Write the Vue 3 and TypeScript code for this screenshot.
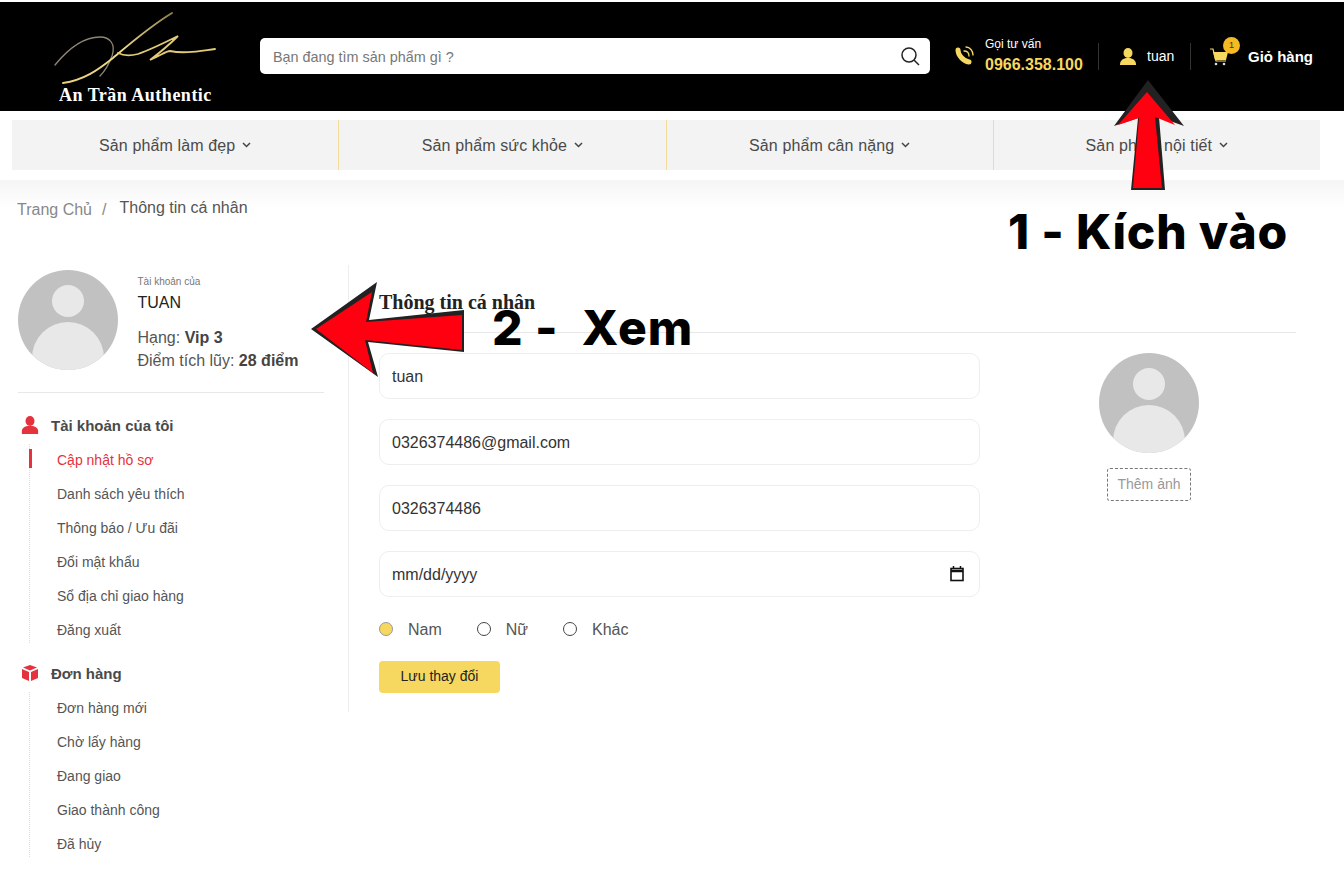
<script setup lang="ts">
const navItems = ['Sản phẩm làm đẹp', 'Sản phẩm sức khỏe', 'Sản phẩm cân nặng', 'Sản phẩm nội tiết'];
const accountLinks = ['Cập nhật hồ sơ', 'Danh sách yêu thích', 'Thông báo / Ưu đãi', 'Đổi mật khẩu', 'Sổ địa chỉ giao hàng', 'Đăng xuất'];
const orderLinks = ['Đơn hàng mới', 'Chờ lấy hàng', 'Đang giao', 'Giao thành công', 'Đã hủy'];
const fields = ['tuan', '0326374486@gmail.com', '0326374486'];
const genders = ['Nam', 'Nữ', 'Khác'];
</script>

<template>
  <div class="page">
    <header class="top">
      <div class="logo">
        <svg class="logo-mark" width="170" height="76" viewBox="0 0 170 76" fill="none" stroke-linecap="round">
          <defs>
            <linearGradient id="gold" x1="0" y1="1" x2="1" y2="0">
              <stop offset="0" stop-color="#e9d27a" />
              <stop offset="0.5" stop-color="#f0dc88" />
              <stop offset="1" stop-color="#8f7f4e" />
            </linearGradient>
          </defs>
          <path d="M1 53C14 37 30 25 46 25C56 25 62 32 58 44C55 52 50 60 46 64" stroke="#8d8672" stroke-width="1.300" />
          <path d="M118 1C95 15 72 35 59 46C44 58 30 68 9 71" stroke="url(#gold)" stroke-width="1.900" />
          <path d="M64 41C70 44 76 44 84 42C98 37 112 30 124 24C116 32 104 42 96 48C106 44 112 39 116 39C130 42 145 39 161 37" stroke="#e2cb75" stroke-width="1.800" />
        </svg>
        <span class="logo-text">An Trần Authentic</span>
      </div>
      <div class="search">
        <span class="search-text">Bạn đang tìm sản phẩm gì ?</span>
        <svg width="20" height="20" viewBox="0 0 20 20" fill="none" stroke="#222" stroke-width="1.500">
          <circle cx="9" cy="9" r="7" />
          <path d="M14 14l5 5" />
        </svg>
      </div>
      <div class="hotline">
        <svg width="22" height="22" viewBox="0 0 22 22" fill="none" stroke="#f6d860" stroke-linecap="round">
          <path d="M4 6C4 11 9 17 15 18" stroke-width="5" />
          <path d="M10 7C13 7 15 9 15 12" stroke-width="1.300" />
          <path d="M12 3C16 3 19 7 19 11" stroke-width="1.300" />
        </svg>
        <div class="hotline-text">
          <span class="hotline-label">Gọi tư vấn</span>
          <b class="hotline-num">0966.358.100</b>
        </div>
      </div>
      <div class="user">
        <svg width="16" height="18" viewBox="0 0 16 18" fill="#f6d860">
          <ellipse cx="8" cy="5" rx="4.500" ry="5" />
          <path d="M0 17c0-4 2-6 6-7h4c4 1 6 3 6 7z" />
        </svg>
        <span class="user-name">tuan</span>
      </div>
      <div class="cart">
        <svg width="20" height="20" viewBox="0 0 20 20" fill="none">
          <path d="M0 2h3l3 12h10" stroke="#f6d860" stroke-width="1.200" />
          <path d="M3 5h15l-2 8H5z" fill="#f6d860" />
          <circle cx="6" cy="17" r="1.300" fill="#ddd" />
          <circle cx="14" cy="17" r="1.300" fill="#ddd" />
        </svg>
        <span class="cart-badge">1</span>
        <b class="cart-label">Giỏ hàng</b>
      </div>
    </header>

    <nav class="nav">
      <div v-for="item in navItems" :key="item" class="nav-item">
        <span class="nav-label">{{ item }}</span>
        <svg width="9" height="6" viewBox="0 0 9 6" fill="none" stroke="#444" stroke-width="1.500">
          <path d="M1 1l3.500 3.500L8 1" />
        </svg>
      </div>
    </nav>

    <div class="crumbs">
      <span class="crumb-link">Trang Chủ</span>
      <span class="crumb-sep">/</span>
      <span>Thông tin cá nhân</span>
    </div>

    <main class="main">
      <aside class="side">
        <div class="profile">
          <svg class="avatar" width="100" height="100" viewBox="0 0 100 100">
            <defs>
              <clipPath id="side-clip"><circle cx="50" cy="50" r="50" /></clipPath>
            </defs>
            <circle cx="50" cy="50" r="50" fill="#c1c1c1" />
            <circle cx="50" cy="31" r="16" fill="#e8e8e8" />
            <ellipse cx="50" cy="88" rx="36" ry="36" fill="#e8e8e8" clip-path="url(#side-clip)" />
          </svg>
          <div class="profile-info">
            <span class="tiny">Tài khoản của</span>
            <span class="name">TUAN</span>
            <span class="rank">Hạng: <b>Vip 3</b></span>
            <span class="rank">Điểm tích lũy: <b>28 điểm</b></span>
          </div>
        </div>

        <div class="menu-title menu-first">
          <svg width="18" height="18" viewBox="0 0 18 18" fill="#e5333d">
            <ellipse cx="9" cy="5" rx="4.500" ry="5" />
            <path d="M1 18c-1-6 2-7 5-8h6c3 1 6 2 5 8z" />
          </svg>
          <span>Tài khoản của tôi</span>
        </div>
        <ul class="menu">
          <li v-for="(link, i) in accountLinks" :key="link" :class="{ active: i === 0 }">{{ link }}</li>
        </ul>

        <div class="menu-title">
          <svg width="18" height="18" viewBox="0 0 18 18" fill="#e5333d">
            <path d="M1 5l7 3v9l-7-3z" />
            <path d="M10 8l7-3v9l-7 3z" />
            <path d="M2 3.500L9 1l7 2.500L9 6.500z" />
          </svg>
          <span>Đơn hàng</span>
        </div>
        <ul class="menu">
          <li v-for="link in orderLinks" :key="link">{{ link }}</li>
        </ul>
      </aside>

      <section class="content">
        <h3 class="content-title">Thông tin cá nhân</h3>
        <div class="content-body">
          <form class="form" @submit.prevent>
            <div v-for="f in fields" :key="f" class="field">{{ f }}</div>
            <div class="field field-date">
              <span>mm/dd/yyyy</span>
              <svg class="calendar" width="14" height="16" viewBox="0 0 14 16" fill="none">
                <path d="M3.500 0v3M10.500 0v3" stroke="#111" stroke-width="1.500" />
                <rect x="1" y="2.500" width="12" height="12" stroke="#111" stroke-width="1.600" />
                <path d="M1 5h12" stroke="#111" stroke-width="2.500" />
              </svg>
            </div>
            <div class="genders">
              <label v-for="(g, i) in genders" :key="g" class="gender">
                <span class="radio" :class="{ on: i === 0 }"></span>
                <span class="gender-label">{{ g }}</span>
              </label>
            </div>
            <button class="save">Lưu thay đổi</button>
          </form>
          <div class="photo">
            <svg width="100" height="100" viewBox="0 0 100 100">
              <defs>
                <clipPath id="photo-clip"><circle cx="50" cy="50" r="50" /></clipPath>
              </defs>
              <circle cx="50" cy="50" r="50" fill="#c1c1c1" />
              <circle cx="50" cy="31" r="16" fill="#e8e8e8" />
              <ellipse cx="50" cy="88" rx="36" ry="36" fill="#e8e8e8" clip-path="url(#photo-clip)" />
            </svg>
            <span class="add-photo">Thêm ảnh</span>
          </div>
        </div>
      </section>
    </main>

    <!-- annotations drawn over the screenshot -->
    <svg class="arrow arrow-up" width="72" height="114" viewBox="1113 78 72 114">
      <path d="M1148 80L1184 126L1159 117L1165 190H1131L1138 118L1114 126z" fill="#222" />
      <path d="M1147 92L1175 125L1155 117L1162 188H1133L1139 118L1118 125z" fill="#fe0010" />
    </svg>
    <span class="note note-1">1 - Kích vào</span>
    <svg class="arrow arrow-left" width="156" height="98" viewBox="310 281 156 98">
      <path d="M311 329L377 282L369 320L464 310V352L368 342L378 377z" fill="#222" />
      <path d="M316 329L372 292L366 322L462 315V350L365 340L373 373z" fill="#fe0010" />
    </svg>
    <span class="note note-2">2 -&nbsp; Xem</span>
  </div>
</template>

<style>
body {
  margin: 0;
  background: #fff;
}
</style>

<style scoped>
.page {
  position: relative;
  height: 874px;
  overflow: hidden;
  padding-top: 2px;
  box-sizing: border-box;
  font-family: "Liberation Sans", Arial, sans-serif;
  color: #444;
}

/* header */
.top {
  position: relative;
  height: 109px;
  background: #000;
  display: flex;
  align-items: flex-start;
  padding-left: 260px;
  color: #fff;
}
.logo {
  position: absolute;
  left: 48px;
  top: 10px;
  width: 176px;
}
.logo-mark {
  display: block;
  margin-left: 6px;
}
.logo-text {
  position: absolute;
  left: 11px;
  top: 73px;
  font-family: "Liberation Serif", serif;
  font-weight: 700;
  font-size: 18px;
  letter-spacing: 0.5px;
  white-space: nowrap;
}
.search {
  width: 670px;
  height: 36px;
  margin-top: 36px;
  background: #fff;
  border-radius: 5px;
  display: flex;
  align-items: center;
  justify-content: space-between;
  padding: 0 10px 0 13px;
  box-sizing: border-box;
}
.search-text {
  color: #777;
  font-size: 14.400px;
  padding-top: 2px;
}
.hotline {
  display: flex;
  align-items: center;
  gap: 9px;
  margin: 32px 0 0 24px;
  width: 144px;
  height: 42px;
  box-sizing: border-box;
}
.hotline-text {
  display: flex;
  flex-direction: column;
  gap: 5px;
}
.hotline-label {
  font-size: 12px;
}
.hotline-num {
  color: #f6d860;
  font-size: 16px;
  white-space: nowrap;
}
.user {
  display: flex;
  align-items: center;
  gap: 11px;
  width: 93px;
  height: 27px;
  margin-top: 41px;
  padding-left: 21px;
  font-size: 14px;
  border-left: 1px solid #333;
  border-right: 1px solid #333;
  box-sizing: border-box;
}
.user-name,
.cart-label {
  padding-bottom: 2px;
}
.cart {
  position: relative;
  display: flex;
  align-items: center;
  gap: 18px;
  height: 26px;
  margin: 42px 0 0 19px;
  font-size: 15px;
}
.cart-badge {
  position: absolute;
  left: 13px;
  top: -7px;
  width: 17px;
  height: 17px;
  border-radius: 50%;
  background: #f5b921;
  color: #333;
  font-size: 9px;
  line-height: 17px;
  text-align: center;
}

/* nav */
.nav {
  display: flex;
  margin: 9px 24px 0 12px;
  height: 50px;
  background: #f3f3f3;
}
.nav-item {
  flex: 1;
  display: flex;
  align-items: center;
  justify-content: center;
  gap: 7px;
  font-size: 16px;
  color: #4a4a4a;
  border-right: 1px solid #f3dc9a;
}
.nav-item:last-child {
  border-right: 0;
}
.nav-label {
  padding-top: 2px;
  letter-spacing: 0.12px;
}

/* breadcrumb */
.crumbs {
  margin-top: 10px;
  height: 85px;
  padding: 19px 0 0 17px;
  box-sizing: border-box;
  display: flex;
  gap: 10px;
  font-size: 16px;
  color: #555;
  background: linear-gradient(#f5f5f5, #fff 28px);
}
.crumb-link,
.crumb-sep {
  color: #888;
  padding-top: 2px;
}
.crumb-sep {
  margin-right: 3px;
}

/* main */
.main {
  display: flex;
  align-items: flex-start;
}
.side {
  width: 306px;
  margin-left: 18px;
  margin-right: 24px;
  flex: none;
}
.profile {
  display: flex;
  gap: 19.500px;
  padding: 5px 0 22px;
  height: 128px;
  box-sizing: border-box;
  border-bottom: 1px solid #e8e8e8;
}
.avatar {
  flex: none;
}
.profile-info {
  display: flex;
  flex-direction: column;
  font-size: 16px;
  color: #555;
}
.tiny {
  font-size: 10px;
  color: #777;
  margin-top: 6px;
}
.name {
  font-size: 16px;
  color: #222;
  margin: 7px 0 14px;
}
.rank {
  line-height: 23px;
}
.rank b {
  font-weight: 700;
  color: #444;
}
.menu-title {
  display: flex;
  align-items: center;
  gap: 12px;
  height: 32px;
  margin-left: 3px;
  font-size: 15px;
  font-weight: 700;
  color: #4a4a4a;
}
.menu-first {
  margin-top: 16px;
}
.menu {
  list-style: none;
  margin: 3px 0 14px 11px;
  padding: 0;
  border-left: 1px dotted #ddd;
}
.menu li {
  height: 34px;
  line-height: 32px;
  padding-left: 27px;
  font-size: 14px;
  color: #555;
  position: relative;
}
.menu li:last-child {
  height: 29px;
}
.menu li.active {
  color: #e5333d;
}
.menu li.active::before {
  content: "";
  position: absolute;
  left: -1px;
  top: 5px;
  width: 3px;
  height: 19px;
  background: #e5333d;
}
.content {
  flex: 1;
  border-left: 1px solid #eee;
  height: 447px;
  margin-right: 48px;
}
.content-title {
  margin: 0;
  padding: 27px 0 19px 30px;
  font-family: "Liberation Serif", serif;
  font-size: 20px;
  font-weight: 700;
  line-height: 21px;
  color: #222;
  border-bottom: 1px solid #e8e8e8;
}
.content-body {
  display: flex;
  padding: 20px 0 0 30px;
}
.form {
  width: 601px;
  flex: none;
}
.field {
  height: 46px;
  margin-bottom: 20px;
  padding: 2px 15px 0 12px;
  border: 1px solid #eee;
  border-radius: 10px;
  box-sizing: border-box;
  display: flex;
  align-items: center;
  justify-content: space-between;
  font-size: 16px;
  color: #333;
}
.calendar {
  margin-top: -2px;
}
.genders {
  display: flex;
  gap: 35px;
  margin: -1px 0 0;
  height: 26px;
  align-items: center;
}
.gender {
  display: flex;
  align-items: center;
  gap: 15px;
  font-size: 16px;
  color: #555;
}
.gender-label {
  padding-top: 2px;
}
.radio {
  width: 14px;
  height: 14px;
  border: 1px solid #444;
  border-radius: 50%;
  box-sizing: border-box;
}
.radio.on {
  background: #f6d860;
  border-color: #999;
}
.save {
  display: block;
  margin-top: 19px;
  width: 121px;
  height: 32px;
  padding: 0 0 2px;
  border: 0;
  border-radius: 4px;
  background: #f6d860;
  font-family: inherit;
  font-size: 14px;
  color: #222;
}
.photo {
  margin-left: 119px;
  display: flex;
  flex-direction: column;
  align-items: center;
  gap: 15px;
}
.add-photo {
  width: 84px;
  height: 33px;
  line-height: 31px;
  text-align: center;
  border: 1px dashed #777;
  border-radius: 3px;
  box-sizing: border-box;
  font-size: 14px;
  color: #999;
}

/* annotations */
.arrow {
  position: absolute;
}
.arrow-up {
  left: 1113px;
  top: 78px;
}
.arrow-left {
  left: 310px;
  top: 281px;
}
.note {
  position: absolute;
  font-family: Inter, sans-serif;
  font-weight: 800;
  color: #000;
  white-space: nowrap;
  font-size: 48px;
  line-height: 56px;
  letter-spacing: 0.8px;
}
.note-1 {
  left: 1008px;
  top: 204px;
}
.note-2 {
  left: 492px;
  top: 300px;
  letter-spacing: 1px;
}
</style>
